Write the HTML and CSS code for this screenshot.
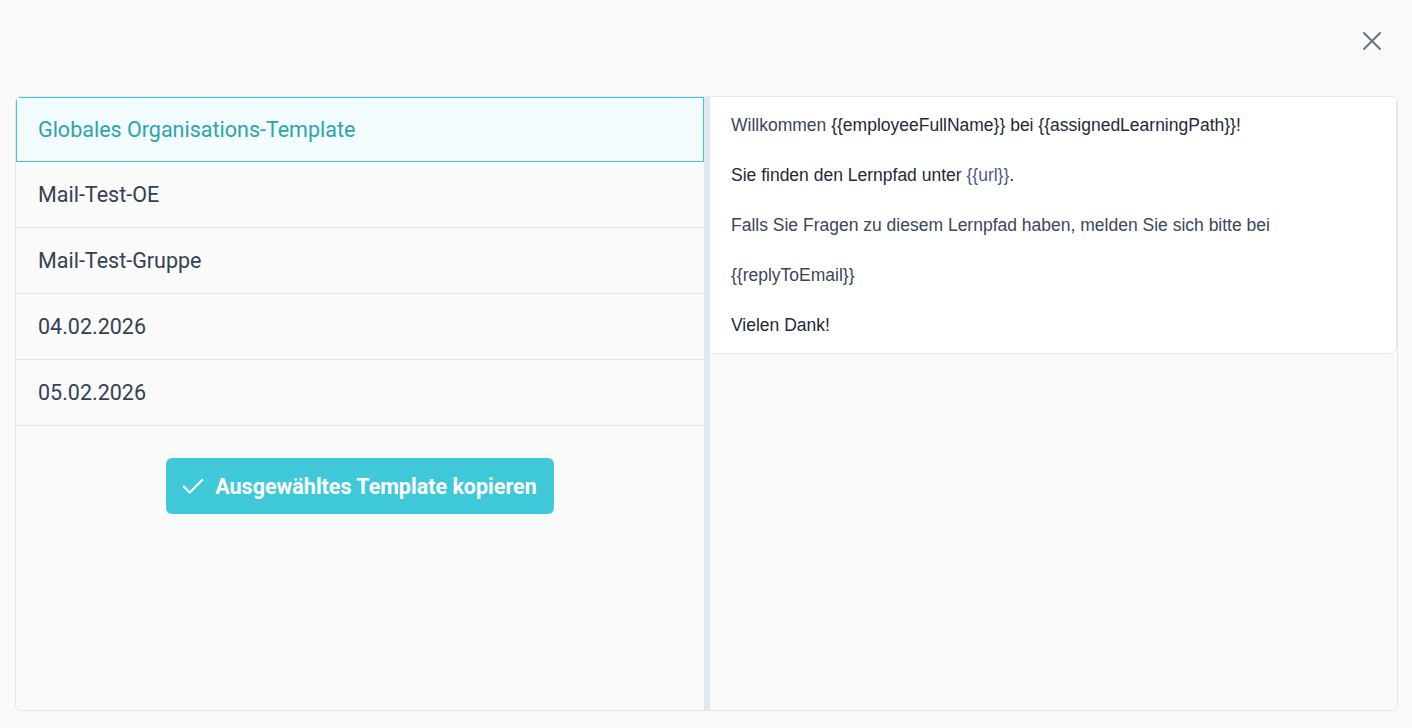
FILE: index.html
```html
<!DOCTYPE html>
<html lang="de">
<head>
<meta charset="utf-8">
<title>Template kopieren</title>
<link rel="stylesheet" href="styles.css">
</head>
<body>
<div class="dialog">
  <div class="dialog-header">
    <button class="close" aria-label="Schließen">
      <svg width="20" height="20" viewBox="0 0 20 20"><path d="M2 2 L18 18 M18 2 L2 18" stroke="#64748b" stroke-width="2" stroke-linecap="round"/></svg>
    </button>
  </div>
  <div class="panes">
    <div class="list-pane">
      <ul class="template-list">
        <li class="item active">Globales Organisations-Template</li>
        <li class="item">Mail-Test-OE</li>
        <li class="item">Mail-Test-Gruppe</li>
        <li class="item">04.02.2026</li>
        <li class="item">05.02.2026</li>
      </ul>
      <div class="actions">
        <button class="copy-btn">
          <svg width="26" height="26" viewBox="0 0 24 24"><path d="M3.5 12.5 L9 18 L20.5 6.5" fill="none" stroke="#fff" stroke-width="2" stroke-linecap="round" stroke-linejoin="round"/></svg>
          <span>Ausgewähltes Template kopieren</span>
        </button>
      </div>
    </div>
    <div class="divider"></div>
    <div class="preview-pane">
      <div class="preview-card">
        <p class="slate">Willkommen <span class="dark">{{employeeFullName}} bei {{assignedLearningPath}}!</span></p>
        <p class="dark">Sie finden den Lernpfad unter <span class="var">{{url}}</span>.</p>
        <p class="slate">Falls Sie Fragen zu diesem Lernpfad haben, melden Sie sich bitte bei</p>
        <p class="slate">{{replyToEmail}}</p>
        <p class="dark">Vielen Dank!</p>
      </div>
    </div>
  </div>
</div>
</body>
</html>
```
FILE: styles.css
```css
* { box-sizing: border-box; }

html, body {
  margin: 0;
  height: 100%;
}

body {
  background: #fafafa;
  font-family: Roboto, "Liberation Sans", sans-serif;
}

.dialog {
  display: flex;
  flex-direction: column;
  height: 728px;
  padding: 0 14px 17px 15px;
}

.dialog-header {
  height: 96px;
  display: flex;
  justify-content: flex-end;
  align-items: flex-start;
}

.close {
  margin-top: 31px;
  margin-right: 16px;
  width: 20px;
  height: 20px;
  padding: 0;
  border: 0;
  background: none;
  cursor: pointer;
}

.close svg { display: block; }

.panes {
  flex: 1;
  display: flex;
  border: 1px solid #e2e8f0;
  border-radius: 6px;
  overflow: hidden;
}

.list-pane {
  width: 688px;
  display: flex;
  flex-direction: column;
}

.template-list {
  list-style: none;
  margin: 0;
  padding: 0;
}

.item {
  height: 66px;
  display: flex;
  align-items: center;
  padding: 0 22px;
  font-size: 21.5px;
  color: #334155;
  border-bottom: 1px solid #e5e7eb;
}

.item.active {
  height: 65px;
  background: #f2fbfd;
  color: #2ea5ad;
  border: 1px solid #3ec8d8;
  padding-left: 21px;
}

.actions {
  display: flex;
  justify-content: center;
  padding-top: 32px;
}

.copy-btn {
  display: flex;
  align-items: center;
  gap: 9px;
  height: 56px;
  padding: 0 17px 0 14px;
  background: #3fc9d8;
  border: 0;
  border-radius: 6px;
  color: #fff;
  font-family: Roboto, "Liberation Sans", sans-serif;
  font-size: 21.5px;
  font-weight: 700;
  cursor: pointer;
}

.copy-btn svg { display: block; }

.divider {
  width: 6px;
  background: #e2e8f0;
}

.preview-pane {
  flex: 1;
}

.preview-card {
  background: #fff;
  border: 1px solid #e2e8f0;
  border-top: 0;
  border-left: 0;
  border-radius: 0 0 8px 0;
  padding: 3px 20px 3px 21px;
  font-family: "Liberation Sans", Arial, sans-serif;
  font-size: 17.5px;
}

.preview-card p {
  margin: 0;
  line-height: 50px;
}

.slate { color: #3b4658; }
.dark { color: #1f2937; }
.var { color: #4b5c84; }
```
